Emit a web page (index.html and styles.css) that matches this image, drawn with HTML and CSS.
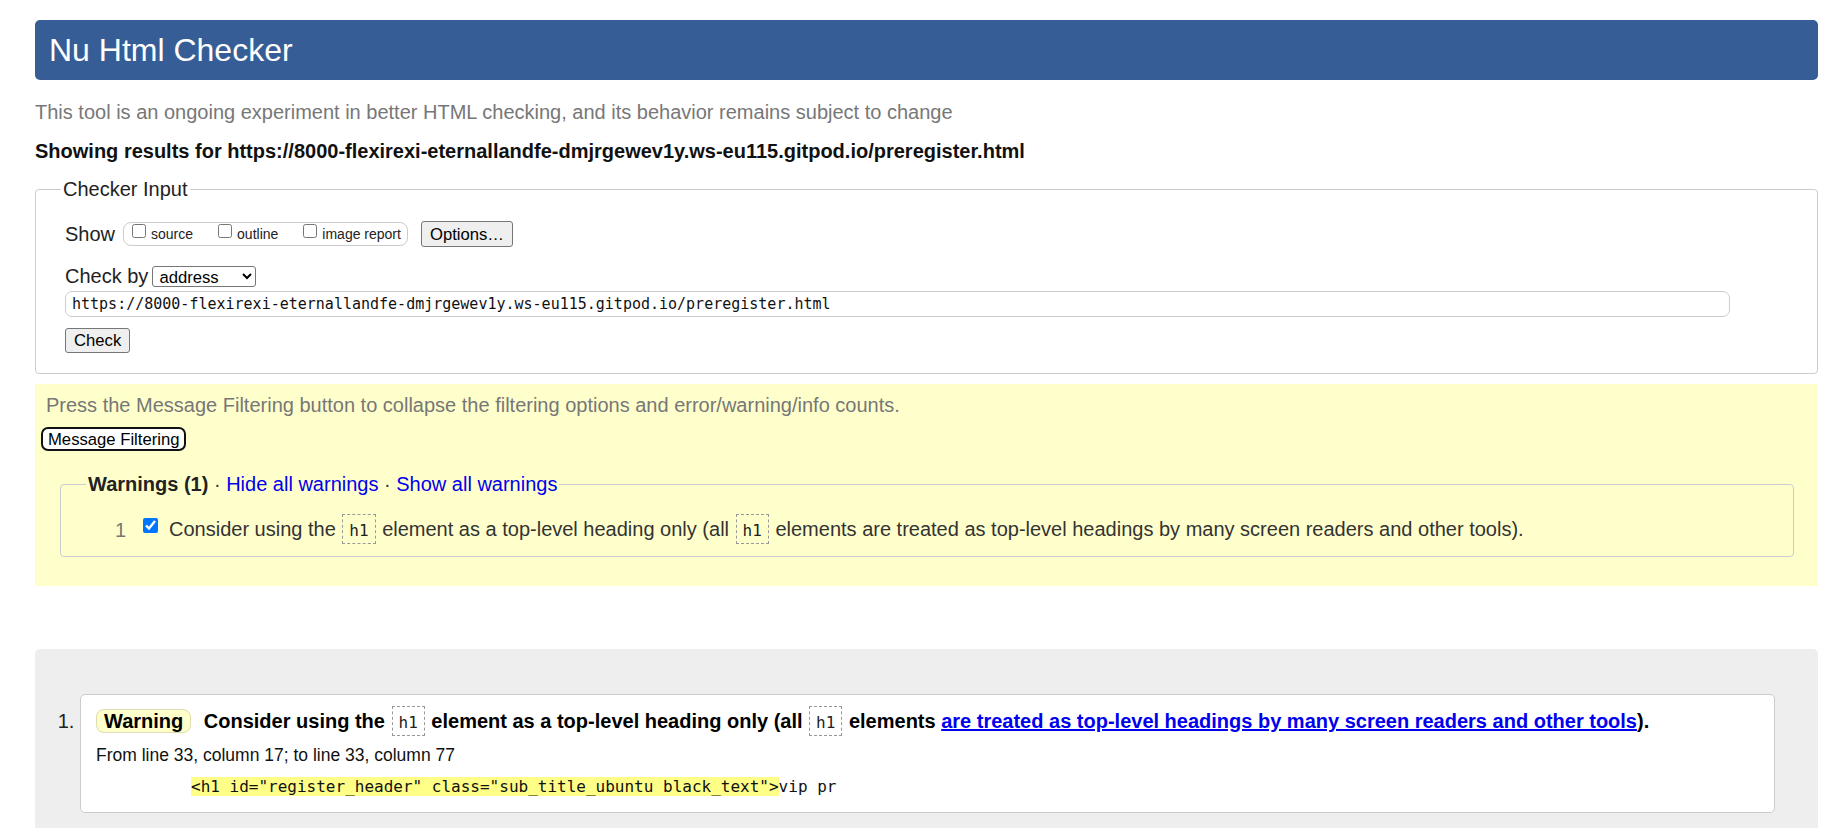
FILE: index.html
```html
<!DOCTYPE html>
<html lang="en">
<head>
<meta charset="utf-8">
<title>Nu Html Checker</title>
<link rel="stylesheet" href="styles.css">
</head>
<body>
<h1 class="title">Nu Html Checker</h1>
<p class="tagline">This tool is an ongoing experiment in better HTML checking, and its behavior remains subject to change</p>
<p class="showing">Showing results for https://8000-flexirexi-eternallandfe-dmjrgewev1y.ws-eu115.gitpod.io/preregister.html</p>
<form class="checker">
  <fieldset class="input-set">
    <legend>Checker Input</legend>
    <div class="row row-show">
      <span class="label">Show</span>
      <span class="opts">
        <label class="opt"><input type="checkbox" class="cb">source</label>
        <label class="opt"><input type="checkbox" class="cb">outline</label>
        <label class="opt"><input type="checkbox" class="cb">image report</label>
      </span>
      <button type="button" class="btn btn-options">Options…</button>
    </div>
    <div class="row row-by">
      <span class="label">Check by</span>
      <select class="sel"><option>address</option></select>
    </div>
    <input class="url" type="text" value="https://8000-flexirexi-eternallandfe-dmjrgewev1y.ws-eu115.gitpod.io/preregister.html">
    <button type="button" class="btn btn-check">Check</button>
  </fieldset>
</form>
<section class="filters">
  <p class="hint">Press the Message Filtering button to collapse the filtering options and error/warning/info counts.</p>
  <button type="button" class="btn-filter">Message Filtering</button>
  <fieldset class="warn-set">
    <legend><b class="warn-title">Warnings (1)</b> · <a href="#" class="lnk">Hide all warnings</a> · <a href="#" class="lnk">Show all warnings</a></legend>
    <div class="warn-row">
      <span class="num">1</span>
      <input type="checkbox" class="cb-on" checked>
      <span class="warn-text">Consider using the <code class="tag">h1</code> element as a top-level heading only (all <code class="tag">h1</code> elements are treated as top-level headings by many screen readers and other tools).</span>
    </div>
  </fieldset>
</section>
<section class="results">
  <ol class="msgs">
    <li class="msg">
      <p class="msg-line"><strong class="badge">Warning</strong> <span>Consider using the <code class="tag">h1</code> element as a top-level heading only (all <code class="tag">h1</code> elements <a href="#" class="lnk-msg">are treated as top-level headings by many screen readers and other tools</a>).</span></p>
      <p class="loc">From line 33, column 17; to line 33, column 77</p>
      <p class="extract"><code class="src"><mark class="hl">&lt;h1 id="register_header" class="sub_title_ubuntu black_text"&gt;</mark>vip pr</code></p>
    </li>
  </ol>
</section>
</body>
</html>
```

FILE: styles.css
```css
html {
  overflow: hidden;
  background: #fff;
}

body {
  margin: 20px 12px 0 35px;
  font-family: "Liberation Sans", Arial, sans-serif;
  font-size: 20px;
  line-height: 23px;
  color: #222;
}

.title {
  margin: 0;
  height: 60px;
  line-height: 60px;
  padding: 0 14px;
  background: #365d95;
  color: #fff;
  font-size: 32px;
  font-weight: normal;
  border-radius: 5px;
}

.tagline {
  margin: 21px 0 0;
  color: #777;
}

.showing {
  margin: 16px 0 0;
  font-weight: bold;
  color: #111;
}

.checker {
  margin: 15px 0 0;
}

.input-set {
  margin: 0;
  padding: 20px 29px 20px 29px;
  border: 1px solid #ccc;
  border-radius: 4px;
  min-width: 0;
}

.input-set legend {
  padding: 0 2px;
  margin-left: -4px;
  color: #222;
}

.row {
  display: flex;
  align-items: center;
}

.row-show {
  height: 26px;
}

.label {
  color: #222;
}

.row-show .label {
  margin-right: 8px;
}

.opts {
  display: flex;
  align-items: center;
  box-sizing: border-box;
  height: 24px;
  padding: 0 6px 0 8px;
  border: 1px solid #ccc;
  border-radius: 8px;
  font-size: 14px;
  line-height: 16px;
  color: #222;
}

.opt {
  display: flex;
  align-items: center;
  height: 22px;
  margin-right: 25px;
}

.opt:last-child {
  margin-right: 0;
}

.cb {
  align-self: flex-start;
  width: 14px;
  height: 14px;
  margin: 1px 5px 0 0;
}

.btn {
  font-family: "Liberation Sans", Arial, sans-serif;
  font-size: 16.67px;
  line-height: 19px;
  color: #000;
  background: #efefef;
  border: 1px solid #767676;
  border-radius: 3px;
  padding: 0 8px;
  box-sizing: border-box;
}

.btn-options {
  height: 26px;
  margin-left: 13px;
}

.row-by {
  height: 21px;
  margin-top: 19px;
}

.sel {
  margin-left: 4px;
  width: 104px;
  height: 21px;
  box-sizing: border-box;
  font-family: "Liberation Sans", Arial, sans-serif;
  font-size: 16.67px;
  color: #000;
  background: #fff;
  border: 1px solid #767676;
  border-radius: 3px;
  padding: 0 2px;
}

.url {
  display: block;
  margin: 4px 0 0;
  width: 1665px;
  height: 26px;
  box-sizing: border-box;
  padding: 0 6px;
  border: 1px solid #ccc;
  border-radius: 7px;
  font-family: "DejaVu Sans Mono", "Liberation Mono", monospace;
  font-size: 15px;
  color: #111;
  background: #fff;
}

.btn-check {
  display: block;
  height: 25px;
  margin-top: 11px;
}

.filters {
  margin-top: 10px;
  padding: 10px 0 29px;
  background: #ffc;
}

.hint {
  margin: 0 0 0 11px;
  color: #777;
}

.btn-filter {
  display: block;
  margin: 10px 0 0 6px;
  height: 24px;
  box-sizing: border-box;
  padding: 0 5px;
  font-family: "Liberation Sans", Arial, sans-serif;
  font-size: 16.67px;
  line-height: 19px;
  color: #000;
  background: #fff;
  border: 2px solid #111;
  border-radius: 7px;
}

.warn-set {
  margin: 22px 24px 0 25px;
  padding: 19px 14px 11px 14px;
  border: 1px solid #ccc;
  border-radius: 4px;
  min-width: 0;
}

.warn-set legend {
  padding: 0 2px;
  margin-left: 11px;
  color: #333;
}

.warn-title {
  color: #222;
}

.lnk {
  color: #00e;
  text-decoration: none;
}

.warn-row {
  display: flex;
  align-items: center;
  height: 30px;
  color: #333;
}

.num {
  width: 51px;
  text-align: right;
  color: #777;
}

.cb-on {
  align-self: flex-start;
  width: 15px;
  height: 15px;
  margin: 3px 11px 0 17px;
  accent-color: #0075ff;
}

.tag {
  font-family: "DejaVu Sans Mono", "Liberation Mono", monospace;
  font-size: 16px;
  font-weight: normal;
  padding: 6px 6px 3px;
  margin: 0 1px;
  border: 1px dashed #999;
  color: #222;
}

.results {
  margin-top: 63px;
  padding: 45px 43px 40px 45px;
  background: #eee;
  border-radius: 5px 5px 0 0;
}

.msgs {
  margin: 0;
  padding: 0;
  list-style: decimal outside;
}

.msg {
  background: #fff;
  border: 1px solid #ccc;
  border-radius: 5px;
  padding: 15px 15px 15px 15px;
  color: #222;
}

.msg-line {
  margin: 0;
  font-weight: bold;
  color: #000;
}

.badge {
  background: #ffc;
  border: 1px solid #dddcb0;
  border-radius: 8px;
  padding: 0 7px;
  margin-right: 7px;
}

.lnk-msg {
  color: #00e;
  text-decoration: underline;
}

.loc {
  margin: 11px 0 0;
  font-size: 17.5px;
  line-height: 20px;
  color: #111;
}

.extract {
  margin: 10px 0 0 95px;
  line-height: 20px;
}

.src {
  font-family: "DejaVu Sans Mono", "Liberation Mono", monospace;
  font-size: 16px;
  color: #111;
}

.hl {
  background: #ff8;
  color: #111;
}
```
